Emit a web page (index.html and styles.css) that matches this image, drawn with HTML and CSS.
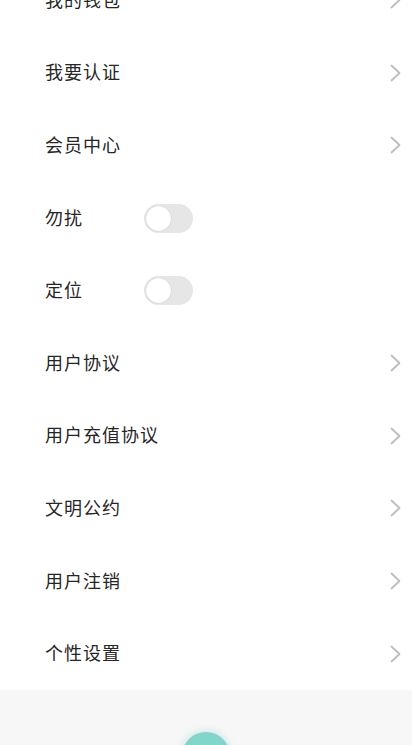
FILE: index.html
```
<html>
<head>
<meta charset="UTF-8">
<link rel="stylesheet" href="styles.css">
</head>
<body>
<div class="page">
  <div class="list">
    <div class="row"><span class="label">我的钱包</span><svg class="arrow" viewBox="0 0 11 18"><polyline points="1.5,1.5 9.5,9 1.5,16.5"/></svg></div>
    <div class="row"><span class="label">我要认证</span><svg class="arrow" viewBox="0 0 11 18"><polyline points="1.5,1.5 9.5,9 1.5,16.5"/></svg></div>
    <div class="row"><span class="label">会员中心</span><svg class="arrow" viewBox="0 0 11 18"><polyline points="1.5,1.5 9.5,9 1.5,16.5"/></svg></div>
    <div class="row"><span class="label short">勿扰</span><span class="switch"><span class="knob"></span></span></div>
    <div class="row"><span class="label short">定位</span><span class="switch"><span class="knob"></span></span></div>
    <div class="row"><span class="label">用户协议</span><svg class="arrow" viewBox="0 0 11 18"><polyline points="1.5,1.5 9.5,9 1.5,16.5"/></svg></div>
    <div class="row"><span class="label">用户充值协议</span><svg class="arrow" viewBox="0 0 11 18"><polyline points="1.5,1.5 9.5,9 1.5,16.5"/></svg></div>
    <div class="row"><span class="label">文明公约</span><svg class="arrow" viewBox="0 0 11 18"><polyline points="1.5,1.5 9.5,9 1.5,16.5"/></svg></div>
    <div class="row"><span class="label">用户注销</span><svg class="arrow" viewBox="0 0 11 18"><polyline points="1.5,1.5 9.5,9 1.5,16.5"/></svg></div>
    <div class="row"><span class="label">个性设置</span><svg class="arrow" viewBox="0 0 11 18"><polyline points="1.5,1.5 9.5,9 1.5,16.5"/></svg></div>
  </div>
  <div class="footer">
    <div class="fab"></div>
  </div>
</div>
</body>
</html>
```
FILE: styles.css
```
body {
  margin: 0;
  background: white;
  font-family: "Noto Sans CJK SC", "Noto Sans", sans-serif;
  overflow: hidden;
}
.page {
  height: 745px;
  overflow: hidden;
  display: flex;
  flex-direction: column;
}
.list {
  margin-top: -36px;
  background: white;
}
.row {
  height: 72.6px;
  display: flex;
  align-items: center;
  padding: 0 10px 0 45px;
}
.label {
  font-size: 18px;
  letter-spacing: 1px;
  color: #262626;
  flex: 1;
  padding-bottom: 3px;
}
.label.short {
  flex: 0 0 99px;
}
.arrow {
  width: 11px;
  height: 18px;
  margin-right: 1px;
  fill: none;
  stroke: #bdbdbd;
  stroke-width: 1.8;
  stroke-linecap: round;
  stroke-linejoin: round;
}
.switch {
  width: 49px;
  height: 29px;
  box-sizing: border-box;
  border-radius: 15px;
  background: #e6e6e6;
  padding: 2px;
  display: flex;
}
.knob {
  width: 25px;
  height: 25px;
  border-radius: 50%;
  background: white;
  box-shadow: 0 0 1px rgba(0,0,0,0.25);
}
.footer {
  flex: 1;
  background: #f7f7f7;
  display: flex;
  justify-content: center;
  padding-top: 42px;
}
.fab {
  width: 48px;
  height: 48px;
  border-radius: 50%;
  background: #80d6cb;
  box-shadow: 0 0 6px 2px rgba(128,214,203,0.35);
}
```
